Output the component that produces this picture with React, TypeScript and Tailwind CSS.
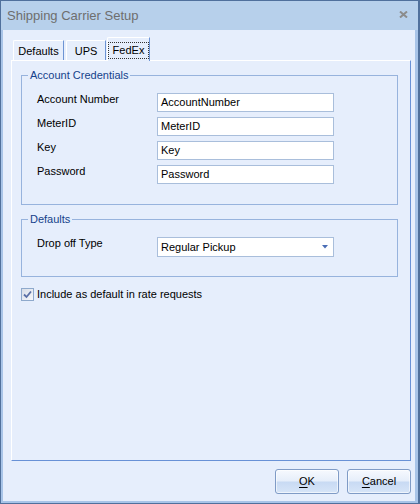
import React from 'react'

const fields = [
  { label: 'Account Number', value: 'AccountNumber' },
  { label: 'MeterID', value: 'MeterID' },
  { label: 'Key', value: 'Key' },
  { label: 'Password', value: 'Password' },
]

function Tab({ label, active, width }: { label: string; active?: boolean; width: string }) {
  if (active) {
    return (
      <div className={`relative z-10 -mb-px h-[24px] ${width} flex items-start justify-center pt-[4px] bg-[#e6eefc] border-t border-l border-white border-r border-r-[#6d94d4] rounded-tl-[2px]`}>
        <span className="px-[4px] leading-[15px] border border-dotted border-[#333]">{label}</span>
      </div>
    )
  }
  return (
    <div className={`h-[20px] ${width} flex items-center justify-center pt-px bg-[#e6eefc] border-t border-l border-white border-r border-r-[#6d94d4] rounded-tl-[2px]`}>
      {label}
    </div>
  )
}

function Btn({ hot, rest }: { hot: string; rest: string }) {
  return (
    <button
      type="button"
      className="h-[25px] w-[64px] rounded-[3px] border border-[#7f9bc6] bg-[linear-gradient(to_bottom,#f6f9fe_0%,#e6eefa_48%,#c8daf3_52%,#d7e5f8_100%)] shadow-[inset_0_0_0_1px_rgba(255,255,255,0.6)] text-[11px] text-black"
    >
      <span className="underline underline-offset-2">{hot}</span>{rest}
    </button>
  )
}

export default function App() {
  return (
    <div className="w-[420px] h-[504px] flex flex-col border-y border-l border-r-2 border-[#50709c] font-['Liberation_Sans',Arial,sans-serif] text-[11px] text-black">
      {/* title bar */}
      <div className="h-[29px] shrink-0 flex items-center justify-between bg-[#b7d0eb] pl-[6px] pr-[10px]">
        <span className="text-[13px] text-[#6e6e6e] pt-px">Shipping Carrier Setup</span>
        <svg width="9" height="7" viewBox="0 0 9 7" className="mb-[2px]">
          <path d="M1 0.5 L8 6.5 M8 0.5 L1 6.5" stroke="#8c8c8c" strokeWidth="2" />
        </svg>
      </div>

      {/* body */}
      <div className="flex-1 flex flex-col bg-[#e6eefc] border-l-2 border-r-[3px] border-b-2 border-[#a8c4e8] pt-[7px] pl-[8px] pr-[4px]">
        {/* tabs */}
        <div className="h-[23px] flex items-end pl-[2px]">
          <Tab label="Defaults" width="w-[51px]" />
          <div className="w-[2px]" />
          <Tab label="UPS" width="w-[40px]" />
          <div className="w-px" />
          <Tab label="FedEx" width="w-[43px]" active />
        </div>

        {/* tab page */}
        <div className="h-[401px] flex flex-col border-t border-l border-white border-r border-b border-r-[#6891d6] border-b-[#6891d6] pl-[9px] pr-[12px]">
          <fieldset className="mt-[7px] border border-[#97b3dd] pb-[20px]">
            <legend className="ml-[6px] px-[2px] leading-[14px] text-[#15428b]">Account Credentials</legend>
            <div className="pt-[11px] pl-[15px] grid grid-cols-[120px_177px] gap-y-[5px]">
              {fields.map(f => (
                <React.Fragment key={f.label}>
                  <span className="leading-[13px] self-start">{f.label}</span>
                  <div className="h-[19px] border border-[#a9bedb] bg-white flex items-center pl-[3px]">{f.value}</div>
                </React.Fragment>
              ))}
            </div>
          </fieldset>

          <fieldset className="mt-[7px] border border-[#97b3dd] pb-[19px]">
            <legend className="ml-[6px] px-[2px] leading-[14px] text-[#15428b]">Defaults</legend>
            <div className="pt-[11px] pl-[15px] grid grid-cols-[120px_177px]">
              <span className="leading-[13px] self-start">Drop off Type</span>
              <div className="h-[20px] border border-[#a9bedb] bg-white flex items-center justify-between pl-[3px] pr-[5px]">
                <span>Regular Pickup</span>
                <svg width="6" height="4" viewBox="0 0 6 4">
                  <path d="M0 0 H6 L3 3.5 Z" fill="#4a6db5" />
                </svg>
              </div>
            </div>
          </fieldset>

          <label className="mt-[11px] flex items-center gap-[3px]">
            <span className="w-[13px] h-[13px] border border-[#8ea9cc] bg-[linear-gradient(to_bottom_right,#d8dee8,#f7f8fa)] flex items-center justify-center">
              <svg width="9" height="9" viewBox="0 0 9 9">
                <path d="M1 4.5 L3.5 7 L8 1.5" stroke="#5a6fa6" strokeWidth="1.8" fill="none" />
              </svg>
            </span>
            <span className="leading-[13px]">Include as default in rate requests</span>
          </label>
        </div>

        {/* buttons */}
        <div className="mt-[8px] flex justify-end gap-[8px]">
          <Btn hot="O" rest="K" />
          <Btn hot="C" rest="ancel" />
        </div>
      </div>
    </div>
  )
}
